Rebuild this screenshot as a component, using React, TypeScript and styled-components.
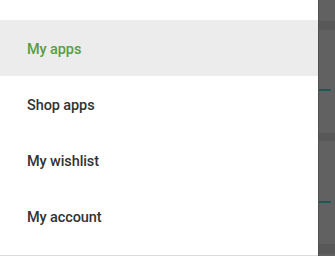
import React from "react";
import styled, { createGlobalStyle } from "styled-components";

const Global = createGlobalStyle`
  html, body { margin: 0; padding: 0; background: #5f5f5f; }
  body { font-family: Roboto, "Noto Sans", Arial, sans-serif; }
  #root { width: 335px; height: 256px; overflow: hidden; }
`;

const Screen = styled.div`
  display: flex;
  width: 335px;
  height: 256px;
  overflow: hidden;
`;

const Drawer = styled.nav`
  width: 318px;
  flex: none;
  background: #ffffff;
  padding-top: 20px;
  box-sizing: border-box;
  display: flex;
  flex-direction: column;
  border-bottom: 1px solid #dcdcdc;
`;

const Item = styled.div<{ $active?: boolean }>`
  height: 56px;
  box-sizing: border-box;
  padding-top: 2px;
  display: flex;
  align-items: center;
  padding-left: 27px;
  font-size: 14.5px;
  font-weight: 500;
  letter-spacing: -0.1px;
  color: ${(p) => (p.$active ? "#5b9e3c" : "#333333")};
  background: ${(p) => (p.$active ? "#ececec" : "transparent")};
`;

const Scrim = styled.div`
  flex: 1;
  background: #616161;
  border-left: 1px solid #4f4f4f;
  display: flex;
  flex-direction: column;
`;

const Band = styled.div<{ $h: number; $top: number }>`
  height: ${(p) => p.$h}px;
  margin-top: ${(p) => p.$top}px;
  background: #585858;
`;

const Mark = styled.div<{ $top: number }>`
  width: 12px;
  height: 2px;
  margin-top: ${(p) => p.$top}px;
  background: #1d5a51;
`;

const items = ["My apps", "Shop apps", "My wishlist", "My account"];

export default function App() {
  return (
    <>
      <Global />
      <Screen>
        <Drawer>
          {items.map((t, i) => (
            <Item key={t} $active={i === 0}>
              {t}
            </Item>
          ))}
        </Drawer>
        <Scrim>
          <Band $h={9} $top={21} />
          <Mark $top={59} />
          <Band $h={8} $top={42} />
          <Mark $top={60} />
          <Band $h={10} $top={41} />
        </Scrim>
      </Screen>
    </>
  );
}
